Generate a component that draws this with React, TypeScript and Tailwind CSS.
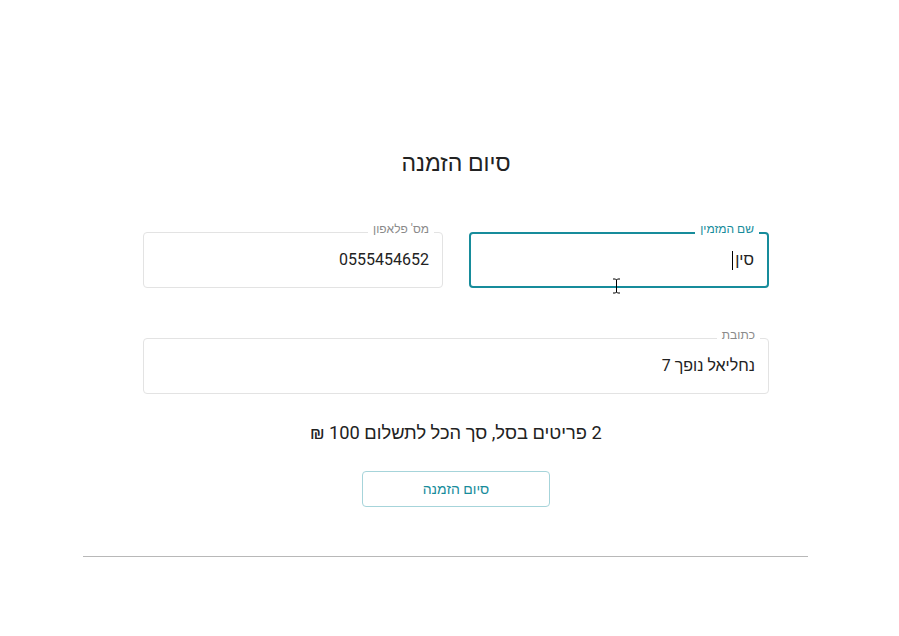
import React from "react";

const teal = "#178c9b";

function Field({
  label,
  value,
  focused = false,
}: {
  label: string;
  value: string;
  focused?: boolean;
}) {
  return (
    <div
      className={`relative h-[56px] rounded-[4px] ${
        focused ? "border-2 border-[#178c9b]" : "border border-[#e3e3e3]"
      }`}
    >
      <span
        className={`absolute right-[8px] bg-white px-[5px] text-[12px] leading-[17px] ${
          focused ? "top-[-13px] text-[#178c9b]" : "top-[-12px] text-[#8a8a8a]"
        }`}
      >
        {label}
      </span>
      <div className="flex h-full items-center px-[13px] text-[16px] text-[#222]">
        <span>{value}</span>
        {focused && <span className="mx-[2px] h-[19px] w-px bg-black" />}
      </div>
    </div>
  );
}

export default function App() {
  return (
    <div
      className="relative min-h-[636px] w-full bg-white"
      style={{ fontFamily: "Roboto, 'Liberation Sans', Arial, sans-serif" }}
    >
      <div className="ml-[83px] w-[725px] pt-[148px]">
        <div className="pl-[60px] pr-[39px]" dir="rtl">
          <h1 className="text-center text-[23px] leading-[32px] text-[#222]">סיום הזמנה</h1>

          <div className="mt-[52px] grid grid-cols-2 gap-[26px]">
            <Field label="שם המזמין" value="סין" focused />
            <Field label="מס' פלאפון" value="0555454652" />
          </div>

          <div className="mt-[50px]">
            <Field label="כתובת" value="נחליאל נופך 7" />
          </div>

          <p className="mt-[25px] text-center text-[18.3px] leading-[28px] text-[#222]">
            2 פריטים בסל, סך הכל לתשלום 100 ₪
          </p>

          <div className="mt-[24px] flex justify-center">
            <button
              className="h-[36px] w-[188px] rounded-[4px] border border-[#a6d4da] text-[14px] font-medium"
              style={{ color: teal }}
            >
              סיום הזמנה
            </button>
          </div>
        </div>

        <div className="mt-[49px] h-px bg-[#b8b8b8]" />
      </div>

      {/* mouse cursor */}
      <svg
        className="absolute left-[612px] top-[278px]"
        width="9"
        height="16"
        viewBox="0 0 9 16"
      >
        <path d="M1 1h2.5l1 1 1-1H8M4.5 2v12M1 15h2.5l1-1 1 1H8" fill="none" stroke="#000" strokeWidth="1" />
      </svg>
    </div>
  );
}
